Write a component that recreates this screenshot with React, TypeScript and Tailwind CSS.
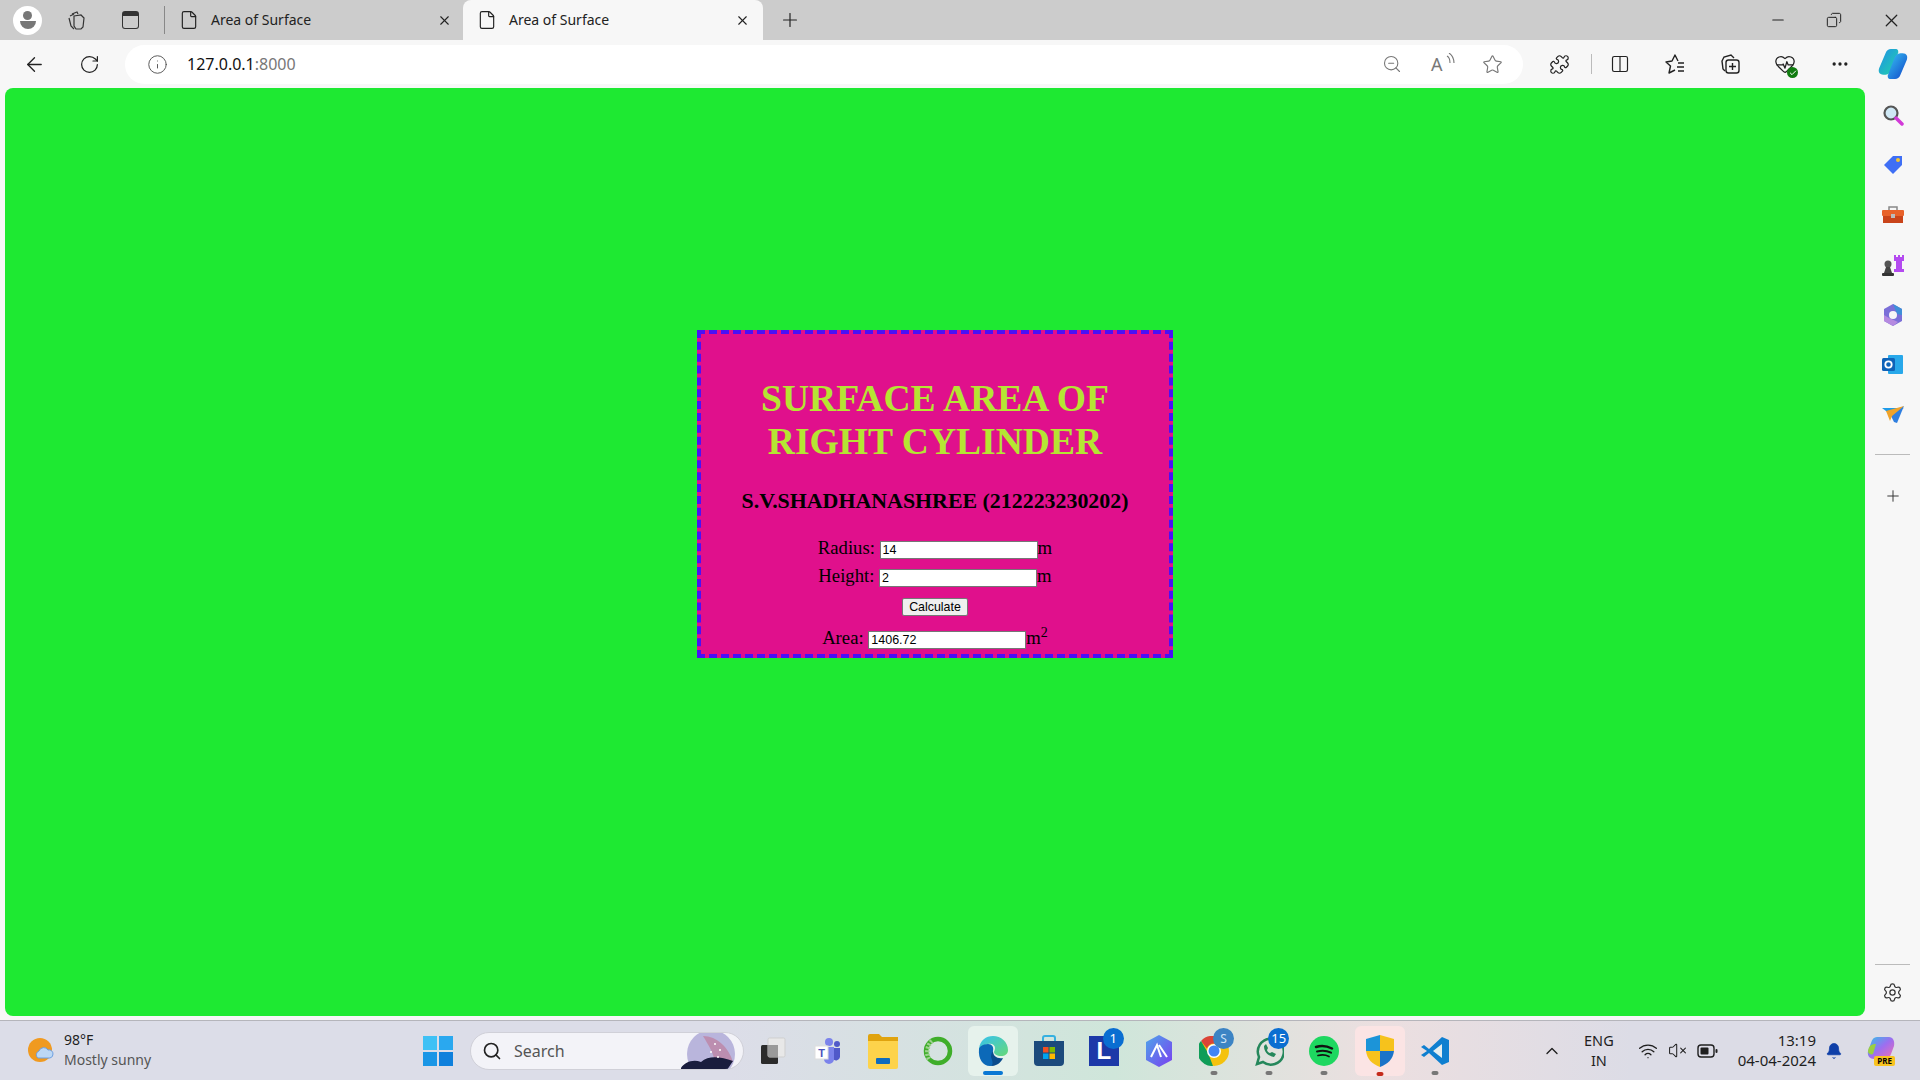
import React from 'react';
import {
  ArrowLeft, RotateCw, Info, ZoomOut, Star, Puzzle, Columns2, Ellipsis, Plus, Minus, Copy, X,
  File, Settings, Search, Bell, ChevronUp, Wifi, VolumeX, HeartPulse, Check,
} from 'lucide-react';

const sans = 'font-["Noto_Sans","Open_Sans",sans-serif]';

const Slot: React.FC<{ w: string; children: React.ReactNode }> = ({ w, children }) => (
  <div className={`${w} h-full shrink-0 flex items-center justify-center`}>{children}</div>
);

const Tab: React.FC<{ active?: boolean }> = ({ active }) => (
  <div className={`h-full shrink-0 flex items-center ${active ? 'w-[300px] bg-[#f7f7f7] rounded-t-lg' : 'w-[298px]'}`}>
    <File size={20} strokeWidth={1.4} className="ml-[14px] text-[#222] shrink-0" />
    <span className="ml-[12px] text-[14px] leading-[18px] -mt-[1px] text-[#222] flex-1">Area of Surface</span>
    <X size={15} strokeWidth={1.8} className={`text-[#222] shrink-0 ${active ? 'mr-[13px]' : 'mr-[11px]'}`} />
  </div>
);

const TabStrip = () => (
  <div className="h-[40px] bg-[#cccccc] flex items-center">
    <div className="ml-[13px] w-[29px] h-[29px] rounded-full bg-white shrink-0 flex flex-col items-center justify-center">
      <div className="w-[9px] h-[9px] rounded-full bg-[#777]" />
      <div className="w-[16px] h-[8px] rounded-b-full rounded-t-md bg-[#777] mt-[1px]" />
    </div>
    <div className="ml-[15px]">
      <Slot w="w-[40px]">
        <svg width="20" height="20" viewBox="0 0 20 20" fill="none" stroke="#333" strokeWidth="1.2">
          <path d="M5 4l5-2 1 2M3 6l4-2M2 8l2 8 3 3" />
          <path d="M7 6l7-1 3 3-1 9-2 2H9l-2-3z" />
        </svg>
      </Slot>
    </div>
    <div className="ml-[13px]">
      <Slot w="w-[40px]">
        <div className="w-[17px] h-[18px] border-[1.5px] border-[#333] rounded-[3px] border-t-[5px]" />
      </Slot>
    </div>
    <div className="ml-[14px] w-px h-[28px] bg-[#888] shrink-0" />
    <div className="h-full flex">
      <Tab />
      <Tab active />
    </div>
    <Plus size={22} strokeWidth={1.3} className="ml-[16px] text-[#222]" />
    <div className="ml-auto flex h-full">
      <Slot w="w-[56px]"><Minus size={18} strokeWidth={1.4} className="text-[#222]" /></Slot>
      <Slot w="w-[56px]"><Copy size={16} strokeWidth={1.5} className="text-[#222] -scale-x-100" /></Slot>
      <Slot w="w-[58px]"><X size={21} strokeWidth={1.4} className="text-[#222]" /></Slot>
    </div>
  </div>
);

const ReadAloud = () => (
  <div className="relative w-[22px] h-[22px]">
    <span className={`absolute left-0 top-[-1px] text-[18px] leading-[24px] text-[#777] ${sans}`}>A</span>
    <svg className="absolute right-[-3px] top-0" width="10" height="14" viewBox="0 0 10 14" fill="none" stroke="#777" strokeWidth="1.1">
      <path d="M1 3c2 1 3 3 3 7M3 0c3 2 5 5 5 10" />
    </svg>
  </div>
);

const FavoritesIcon = () => (
  <svg width="22" height="22" viewBox="0 0 22 22" fill="none" stroke="#222" strokeWidth="1.4">
    <path d="M14 8L11 2 8 8l-6 1 4.500 4L5 20l6-3" strokeLinejoin="round" />
    <path d="M14 10h6M13 14h7M14 18h6" />
  </svg>
);

const CollectionsIcon = () => (
  <svg width="22" height="22" viewBox="0 0 22 22" fill="none" stroke="#222" strokeWidth="1.4">
    <path d="M6 18l-2-2-1-8 2-4 7-2 3 3" />
    <rect x="7" y="7" width="13" height="13" rx="2.5" />
    <path d="M13.5 10v7M10 13.5h7" />
  </svg>
);

const CopilotIcon: React.FC<{ size?: number }> = ({ size = 32 }) => (
  <svg width={size} height={size} viewBox="0 0 30 30">
    <defs>
      <linearGradient id="cpa" x1="0" y1="0" x2="1" y2="1">
        <stop offset="0" stopColor="#1f8fe8" />
        <stop offset="1" stopColor="#22d6a8" />
      </linearGradient>
      <linearGradient id="cpb" x1="0" y1="0" x2="1" y2="1">
        <stop offset="0" stopColor="#38c6f4" />
        <stop offset="1" stopColor="#1043c8" />
      </linearGradient>
    </defs>
    <path d="M13 1h5c1 0 2 1 2 3l-6 16c-1 3-3 5-6 5H6c-4 0-5-3-4-6L8 5c1-3 3-4 5-4z" fill="url(#cpa)" />
    <path d="M17 29h-5c-1 0-2-1-2-3l6-16c1-3 3-5 6-5h2c4 0 5 3 4 6l-6 14c-1 3-3 4-5 4z" fill="url(#cpb)" />
  </svg>
);

const Toolbar = () => (
  <div className="h-[48px] bg-[#f7f7f7] flex items-center">
    <Slot w="w-[68px]"><ArrowLeft size={23} strokeWidth={1.4} className="text-[#222]" /></Slot>
    <Slot w="w-[42px]"><RotateCw size={21} strokeWidth={1.4} className="text-[#222]" /></Slot>
    <div className="ml-[15px] w-[1398px] h-[39px] bg-white rounded-full flex items-center shrink-0">
      <Info size={21} strokeWidth={1.1} className="ml-[22px] text-[#555]" />
      <span className="ml-[19px] text-[16px] text-[#111]">127.0.0.1<span className="text-[#777]">:8000</span></span>
      <div className="ml-auto flex items-center gap-[29px] mr-[20px] text-[#777]">
        <ZoomOut size={20} strokeWidth={1.3} />
        <ReadAloud />
        <Star size={21} strokeWidth={1.3} />
      </div>
    </div>
    <div className="ml-[26px] flex items-center">
      <Puzzle size={21} strokeWidth={1.4} className="text-[#222]" />
      <div className="ml-[21px] w-px h-[20px] bg-[#bbb]" />
      <Columns2 size={20} strokeWidth={1.4} className="ml-[18px] text-[#222]" />
      <div className="ml-[34px]"><FavoritesIcon /></div>
      <div className="ml-[33px]"><CollectionsIcon /></div>
      <div className="ml-[33px] relative">
        <HeartPulse size={22} strokeWidth={1.4} className="text-[#222]" />
        <div className="absolute -right-[2px] -bottom-[3px] w-[11px] h-[11px] rounded-full bg-[#107c10] flex items-center justify-center">
          <Check size={8} strokeWidth={3} className="text-white" />
        </div>
      </div>
      <Ellipsis size={20} strokeWidth={2} className="ml-[34px] text-[#222]" />
      <div className="ml-[27px]"><CopilotIcon /></div>
    </div>
  </div>
);

const inputClass =
  'w-[158px] h-[18px] bg-white border border-[#767676] px-[2px] text-[12.5px] text-black align-baseline font-["Liberation_Sans",sans-serif] outline-none';

const Card = () => (
  <div className='mt-[242px] w-[476px] h-[328px] box-border bg-[#e0108c] border-4 border-dashed border-[#4a10f5] pt-[43px] text-center text-black font-["Liberation_Serif",serif] text-[18.7px]'>
    <h1 className="text-[37.6px] leading-[43px] font-bold text-[#b5e533]">SURFACE AREA OF<br />RIGHT CYLINDER</h1>
    <h3 className="mt-[25px] text-[21.9px] leading-[26px] font-bold">S.V.SHADHANASHREE (212223230202)</h3>
    <div className="mt-[20px] leading-[28px]">
      Radius: <input className={inputClass} value="14" readOnly />m
    </div>
    <div className="leading-[28px]">
      Height: <input className={inputClass} value="2" readOnly />m
    </div>
    <div className="mt-[3px] h-[28px] flex items-center justify-center">
      <button className='w-[66px] h-[18px] bg-[#efefef] border border-[#767676] rounded-[2px] text-[12.4px] leading-none font-["Liberation_Sans",sans-serif] text-black'>Calculate</button>
    </div>
    <div className="leading-[28px] mt-[3px]">
      Area: <input className={inputClass} value="1406.72" readOnly />m<sup>2</sup>
    </div>
  </div>
);

const SideIcon: React.FC<{ children: React.ReactNode }> = ({ children }) => (
  <div className="h-[50px] w-full flex items-center justify-center shrink-0">{children}</div>
);

const Sidebar = () => (
  <div className="w-[55px] shrink-0 flex flex-col items-center pt-[2px]">
    <SideIcon>
      <svg width="22" height="22" viewBox="0 0 22 22">
        <circle cx="9" cy="9" r="6.5" fill="#cfe8f5" stroke="#555" strokeWidth="2.2" />
        <path d="M14 14l6 6" stroke="#d23ad8" strokeWidth="3.5" strokeLinecap="round" />
      </svg>
    </SideIcon>
    <SideIcon>
      <svg width="22" height="22" viewBox="0 0 22 22">
        <path d="M11 2h9v9l-9 9-9-9z" fill="#3f6ff5" />
        <circle cx="16" cy="6" r="2" fill="#f3c533" />
      </svg>
    </SideIcon>
    <SideIcon>
      <svg width="24" height="22" viewBox="0 0 24 22">
        <path d="M8 6V3h8v3" fill="none" stroke="#888" strokeWidth="1.5" />
        <rect x="1" y="6" width="22" height="6" rx="1" fill="#e8622a" />
        <rect x="2" y="12" width="20" height="7" fill="#c9441a" />
        <rect x="10" y="10" width="4" height="4" fill="#bbb" />
      </svg>
    </SideIcon>
    <SideIcon>
      <svg width="24" height="24" viewBox="0 0 24 24">
        <path d="M13 2h2v2h2V2h2v2h2V2h2v6h-2v8h2v3H13v-3h2V8h-2z" fill="#b44af0" />
        <circle cx="7" cy="11" r="3.5" fill="#555" />
        <path d="M5 14h4l2 6H3z" fill="#444" />
        <rect x="1" y="20" width="12" height="3" rx="1" fill="#333" />
      </svg>
    </SideIcon>
    <SideIcon>
      <svg width="22" height="24" viewBox="0 0 22 24">
        <path d="M11 1l9 5v12l-9 5-9-5V6z" fill="#7b6fd8" />
        <path d="M11 1l9 5v6l-5-1z" fill="#3f8fd8" />
        <path d="M2 12l5 3 9 4-5 4-9-5z" fill="#b58ae0" />
        <circle cx="11" cy="12" r="4" fill="#f7f7f7" />
      </svg>
    </SideIcon>
    <SideIcon>
      <svg width="22" height="22" viewBox="0 0 22 22">
        <rect x="6" y="1" width="15" height="19" rx="1" fill="#28a8ea" />
        <rect x="0" y="4" width="13" height="13" rx="1.5" fill="#0f63b8" />
        <circle cx="6.5" cy="10.5" r="3.2" fill="none" stroke="#fff" strokeWidth="1.8" />
      </svg>
    </SideIcon>
    <SideIcon>
      <svg width="24" height="20" viewBox="0 0 24 20">
        <path d="M1 3h22L9 9z" fill="#1e9be8" />
        <path d="M23 1L9 9l4 8 3 1z" fill="#2f7fe0" />
        <path d="M23 1L5 6l4 10 2-5z" fill="#f0a32a" />
      </svg>
    </SideIcon>
    <div className="mt-[14px] w-[35px] h-px bg-[#bbb] shrink-0" />
    <div className="mt-[16px] w-full"><SideIcon><Plus size={18} strokeWidth={1.3} className="text-[#333]" /></SideIcon></div>
    <div className="mt-auto w-[35px] h-px bg-[#bbb] shrink-0" />
    <div className="mt-[3px] h-[48px] flex items-center justify-center shrink-0">
      <Settings size={21} strokeWidth={1.4} className="text-[#333]" />
    </div>
  </div>
);

const Badge: React.FC<{ children: React.ReactNode }> = ({ children }) => (
  <span className="absolute -top-[8px] -right-[5px] min-w-[21px] h-[21px] px-[3px] rounded-full bg-[#0a6ed1] text-white text-[13px] leading-[21px] text-center">
    {children}
  </span>
);

const Dot: React.FC<{ color?: string }> = ({ color = 'bg-[#777]' }) => (
  <div className={`absolute left-1/2 -translate-x-1/2 -bottom-[9px] w-[7px] h-[4px] rounded-full ${color}`} />
);

const Weather = () => (
  <div className="flex items-center w-[423px] shrink-0">
    <svg className="ml-[27px]" width="28" height="28" viewBox="0 0 28 28">
      <circle cx="13" cy="13" r="12" fill="#f09a20" />
      <path d="M11 21a4 4 0 0 1 1-7 5 5 0 0 1 9-1 4 4 0 0 1 5 4 4 4 0 0 1-3 4z" fill="#bcd8f5" stroke="#6fa0e0" strokeWidth="1" />
    </svg>
    <div className={`ml-[9px] -mt-[2px] text-[14px] leading-[20px] ${sans}`}>
      <div className="text-[#1f1f1f]">98°F</div>
      <div className="text-[#555]">Mostly sunny</div>
    </div>
  </div>
);

const WinLogo = () => (
  <svg width="30" height="30" viewBox="0 0 30 30" className="shrink-0">
    <path d="M0 0h14v14H0z" fill="#3fc1f5" />
    <path d="M16 0h14v14H16z" fill="#2aa8ef" />
    <path d="M0 16h14v14H0z" fill="#1a96e6" />
    <path d="M16 16h14v14H16z" fill="#0f80dc" />
  </svg>
);

const SearchBox = () => (
  <div className="ml-[17px] w-[274px] h-[38px] bg-[#f3f3f8] border border-[#d0d0d8] rounded-full flex items-center overflow-hidden shrink-0">
    <Search size={20} strokeWidth={2} className="ml-[11px] text-[#222]" />
    <span className="ml-[12px] text-[16px] text-[#555]">Search</span>
    <svg className="ml-auto" width="68" height="38" viewBox="0 0 68 38">
      <circle cx="36" cy="22" r="24" fill="#b9b5dc" />
      <path d="M28 4c6 10 10 16 12 26H58C54 16 42 4 28 4z" fill="#c0607a" opacity=".45" />
      <path d="M6 36c4-6 12-9 20-6 8-7 20-5 32-1l-6 9H6z" fill="#1a1d3d" />
      <circle cx="40" cy="12" r="1" fill="#fff" />
      <circle cx="45" cy="18" r="1" fill="#fff" />
      <circle cx="36" cy="20" r="1" fill="#fff" />
      <circle cx="43" cy="25" r="1" fill="#fff" />
    </svg>
  </div>
);

const taskIcons: { key: string; node: React.ReactNode; tint?: string; bar?: boolean }[] = [
  {
    key: 'taskview',
    node: (
      <svg width="26" height="28" viewBox="0 0 26 28">
        <rect x="1" y="8" width="17" height="19" rx="1.5" fill="#2b2b2b" />
        <rect x="8" y="1" width="17" height="19" rx="1.5" fill="#e8e8e8" stroke="#cfcfcf" />
        <rect x="8" y="8" width="10" height="12" fill="#9a9a9a" />
      </svg>
    ),
  },
  {
    key: 'teams',
    node: (
      <svg width="28" height="28" viewBox="0 0 28 28">
        <circle cx="15" cy="5" r="4" fill="#7b83eb" />
        <circle cx="23" cy="7" r="3" fill="#5059c9" />
        <path d="M19 11h7v9a4 4 0 0 1-7 2z" fill="#5059c9" />
        <path d="M8 10h12v12a5 5 0 0 1-10 0z" fill="#7b83eb" />
        <rect x="1" y="9" width="13" height="13" fill="#fff" stroke="#ddd" />
        <text x="7.5" y="19.5" fontSize="11" fontWeight="700" textAnchor="middle" fill="#4b53bc" fontFamily="Liberation Sans">T</text>
      </svg>
    ),
  },
  {
    key: 'files',
    node: (
      <svg width="30" height="36" viewBox="0 0 30 36">
        <path d="M0 3a2 2 0 0 1 2-2h9l3 3h16v8H0z" fill="#e0a30e" />
        <path d="M0 8h30v26a2 2 0 0 1-2 2H2a2 2 0 0 1-2-2z" fill="#fdd34b" />
        <rect x="8" y="25" width="14" height="6" rx="1" fill="#0f6cbd" />
      </svg>
    ),
  },
  {
    key: 'ring',
    node: (
      <svg width="30" height="30" viewBox="0 0 30 30">
        <circle cx="15" cy="15" r="12" fill="none" stroke="#3fae2a" strokeWidth="4.5" />
        <path d="M9 5C4 9 3 18 6 23" fill="none" stroke="#9ed18f" strokeWidth="4.5" strokeDasharray="2 1.5" />
      </svg>
    ),
  },
  {
    key: 'edge',
    tint: 'bg-[#e6f2ec]',
    bar: true,
    node: (
      <svg width="30" height="32" viewBox="0 0 30 32">
        <defs>
          <linearGradient id="edg" x1="0" y1="0" x2="1" y2="1">
            <stop offset="0" stopColor="#35c1f1" />
            <stop offset="1" stopColor="#66d978" />
          </linearGradient>
        </defs>
        <path d="M1 14C2 5 8 1 15 1c8 0 15 6 15 14 0 4-3 6-7 6-4 0-7-2-7-4 0-1 1-2 1-4 0-3-3-5-7-4-5 1-8 3-9 5z" fill="url(#edg)" />
        <path d="M1 14c0-2 4-5 9-5 4 0 6 3 5 7-2 5 2 9 8 9-3 4-7 6-11 6C5 31 0 24 1 14z" fill="#0c69b8" />
        <path d="M15 16c0 5 4 8 10 7-2 5-7 8-12 8 3-2 1-6 0-9 0-3 1-5 2-6z" fill="#0a4c8c" />
      </svg>
    ),
  },
  {
    key: 'store',
    node: (
      <svg width="30" height="32" viewBox="0 0 30 32">
        <path d="M9 7V3a2 2 0 0 1 2-2h8a2 2 0 0 1 2 2v4" fill="none" stroke="#35b0e0" strokeWidth="2" />
        <path d="M0 6h30v21a4 4 0 0 1-4 4H4a4 4 0 0 1-4-4z" fill="#1c4a7c" />
        <rect x="9" y="12" width="5.5" height="5.5" fill="#f25022" />
        <rect x="15.5" y="12" width="5.5" height="5.5" fill="#7fba00" />
        <rect x="9" y="18.5" width="5.5" height="5.5" fill="#00a4ef" />
        <rect x="15.5" y="18.5" width="5.5" height="5.5" fill="#ffb900" />
      </svg>
    ),
  },
  {
    key: 'l',
    node: (
      <div className="relative w-[30px] h-[30px] bg-[#1c39a8] flex items-center justify-center">
        <span className='text-white font-bold text-[24px] leading-none font-["Liberation_Sans",sans-serif]'>L</span>
        <Badge>1</Badge>
      </div>
    ),
  },
  {
    key: 'arc',
    node: (
      <svg width="28" height="32" viewBox="0 0 28 32">
        <defs>
          <linearGradient id="arc" x1="0" y1="0" x2="1" y2="1">
            <stop offset="0" stopColor="#4ea5ea" />
            <stop offset="1" stopColor="#7a3ff0" />
          </linearGradient>
        </defs>
        <path d="M14 0l13 7v18l-13 7-13-7V7z" fill="url(#arc)" />
        <path d="M6 22l6-12 4 12M14 10l8 12" fill="none" stroke="#fff" strokeWidth="2" />
      </svg>
    ),
  },
  {
    key: 'chrome',
    node: (
      <div className="relative w-[30px] h-[30px]">
        <svg width="30" height="30" viewBox="0 0 30 30">
          <circle cx="15" cy="15" r="15" fill="#f4c20d" />
          <path d="M15 0a15 15 0 0 1 13 7.500H15a7.500 7.500 0 0 0-7 5L2 5A15 15 0 0 1 15 0z" fill="#db4437" />
          <path d="M2 5l7 12 5 13A15 15 0 0 1 2 5z" fill="#0f9d58" />
          <circle cx="15" cy="15" r="7" fill="#fff" />
          <circle cx="15" cy="15" r="5.500" fill="#4285f4" />
        </svg>
        <span className="absolute -top-[8px] -right-[5px] w-[21px] h-[21px] rounded-full bg-[#3c84c4] text-[#cfe4f7] text-[12px] leading-[21px] text-center">S</span>
        <Dot />
      </div>
    ),
  },
  {
    key: 'whatsapp',
    node: (
      <div className="relative w-[30px] h-[30px]">
        <svg width="30" height="30" viewBox="0 0 30 30" fill="none" stroke="#25875b" strokeWidth="2.500">
          <path d="M3 28l2-7a13 13 0 1 1 4 5z" />
          <path d="M10 10c0 6 4 10 10 11l2-3-4-2-2 1c-1 0-3-2-3-3l1-2-2-4z" fill="#25875b" stroke="none" />
        </svg>
        <Badge>15</Badge>
        <Dot />
      </div>
    ),
  },
  {
    key: 'spotify',
    node: (
      <div className="relative w-[30px] h-[30px] rounded-full bg-[#1ed760] flex items-center justify-center">
        <svg width="20" height="16" viewBox="0 0 20 16" fill="none" stroke="#111" strokeLinecap="round">
          <path d="M2 4c5-1.500 11-1 16 1.500" strokeWidth="2.500" />
          <path d="M3 8.500c4-1 10-.8 14 1.200" strokeWidth="2" />
          <path d="M4 12.500c3.500-.8 8-.6 11 1" strokeWidth="1.700" />
        </svg>
        <Dot />
      </div>
    ),
  },
  {
    key: 'shield',
    tint: 'bg-[#fbe4e4]',
    node: (
      <div className="relative w-[28px] h-[32px]">
        <svg width="28" height="32" viewBox="0 0 28 32">
          <path d="M14 0l14 4v12H14z" fill="#f6c21c" />
          <path d="M14 0L0 4v12h14z" fill="#1c94d8" />
          <path d="M0 16h14v16C6 29 1 24 0 16z" fill="#f6c21c" />
          <path d="M28 16H14v16c8-3 13-8 14-16z" fill="#1c74c8" />
        </svg>
        <Dot color="bg-[#c42b1c]" />
      </div>
    ),
  },
  {
    key: 'vscode',
    node: (
      <div className="relative w-[30px] h-[30px]">
        <svg width="30" height="30" viewBox="0 0 30 30">
          <path d="M22 1l7 3v22l-7 3L9 17l-5 4-3-2 6-4-6-4 3-2 5 4z" fill="#0e7fd0" />
          <path d="M22 8L13 15l9 7z" fill="#e4eef0" />
        </svg>
        <Dot />
      </div>
    ),
  },
];

const TaskIcons = () => (
  <div className="ml-[1px] flex items-center shrink-0">
    {taskIcons.map(t => (
      <div key={t.key} className="w-[55.2px] flex justify-center shrink-0">
        <div className={`w-[50px] h-[50px] rounded-md flex items-center justify-center relative ${t.tint || ''}`}>
          {t.node}
          {t.bar && <div className="absolute bottom-[1px] left-1/2 -translate-x-1/2 w-[20px] h-[4px] rounded-full bg-[#0a78d4]" />}
        </div>
      </div>
    ))}
  </div>
);

const Tray = () => (
  <div className={`ml-auto flex items-center h-full text-[#1f1f1f] ${sans}`}>
    <ChevronUp size={20} strokeWidth={1.6} />
    <div className="ml-[22px] -mt-[2px] text-center text-[14.5px] leading-[20px]">ENG<br />IN</div>
    <Wifi size={20} strokeWidth={1.6} className="ml-[24px]" />
    <VolumeX size={19} strokeWidth={1.3} className="ml-[10px]" />
    <svg className="ml-[10px]" width="21" height="14" viewBox="0 0 21 14" fill="none">
      <rect x="1" y="1" width="16" height="12" rx="3" stroke="#1f1f1f" strokeWidth="1.4" />
      <rect x="3.500" y="3.500" width="8" height="7" rx="1" fill="#1f1f1f" />
      <rect x="18.500" y="5" width="2" height="4" rx="1" fill="#1f1f1f" />
    </svg>
    <div className="ml-[20px] -mt-[2px] text-right text-[15px] leading-[20px]">13:19<br />04-04-2024</div>
    <Bell size={18} fill="#0f3fa8" strokeWidth={1} className="ml-[9px] text-[#0f3fa8]" />
    <div className="ml-[24px] mr-[25px] relative w-[28px] h-[30px]">
      <svg width="28" height="24" viewBox="0 0 28 24">
        <defs>
          <linearGradient id="cpp" x1="0" y1="0" x2="1" y2="1">
            <stop offset="0" stopColor="#2fc3e8" />
            <stop offset=".5" stopColor="#9d6ef0" />
            <stop offset="1" stopColor="#f36fb0" />
          </linearGradient>
        </defs>
        <path d="M10 1h12c4 0 6 4 5 9l-3 8c-1 3-3 5-6 5H7c-4 0-7-3-6-8l3-8c1-4 3-6 6-6z" fill="url(#cpp)" />
        <path d="M1 15c1-6 4-7 8-7l-3 10c-2 1-5 0-5-3z" fill="#9bd040" />
      </svg>
      <span className="absolute bottom-0 right-0 px-[3px] bg-[#f8c320] text-black text-[8px] font-bold leading-[10px] rounded-[2px]">PRE</span>
    </div>
  </div>
);

const Taskbar = () => (
  <div className={`mt-[4px] h-[60px] border-t border-[#b5b5bb] bg-[linear-gradient(90deg,#dcdde8_0%,#dcdde8_38%,#cfe6da_58%,#ecdfe0_72%,#dcdce6_85%)] flex items-center shrink-0 ${sans}`}>
    <Weather />
    <WinLogo />
    <SearchBox />
    <TaskIcons />
    <Tray />
  </div>
);

const App: React.FC = () => (
  <div className={`w-[1920px] h-[1080px] flex flex-col bg-[#f7f7f7] overflow-hidden ${sans}`}>
    <TabStrip />
    <Toolbar />
    <div className="flex flex-1 min-h-0 pl-[5px]">
      <main className="w-[1860px] bg-[#1ee932] rounded-lg flex flex-col items-center shrink-0">
        <Card />
      </main>
      <Sidebar />
    </div>
    <Taskbar />
  </div>
);

export default App;
